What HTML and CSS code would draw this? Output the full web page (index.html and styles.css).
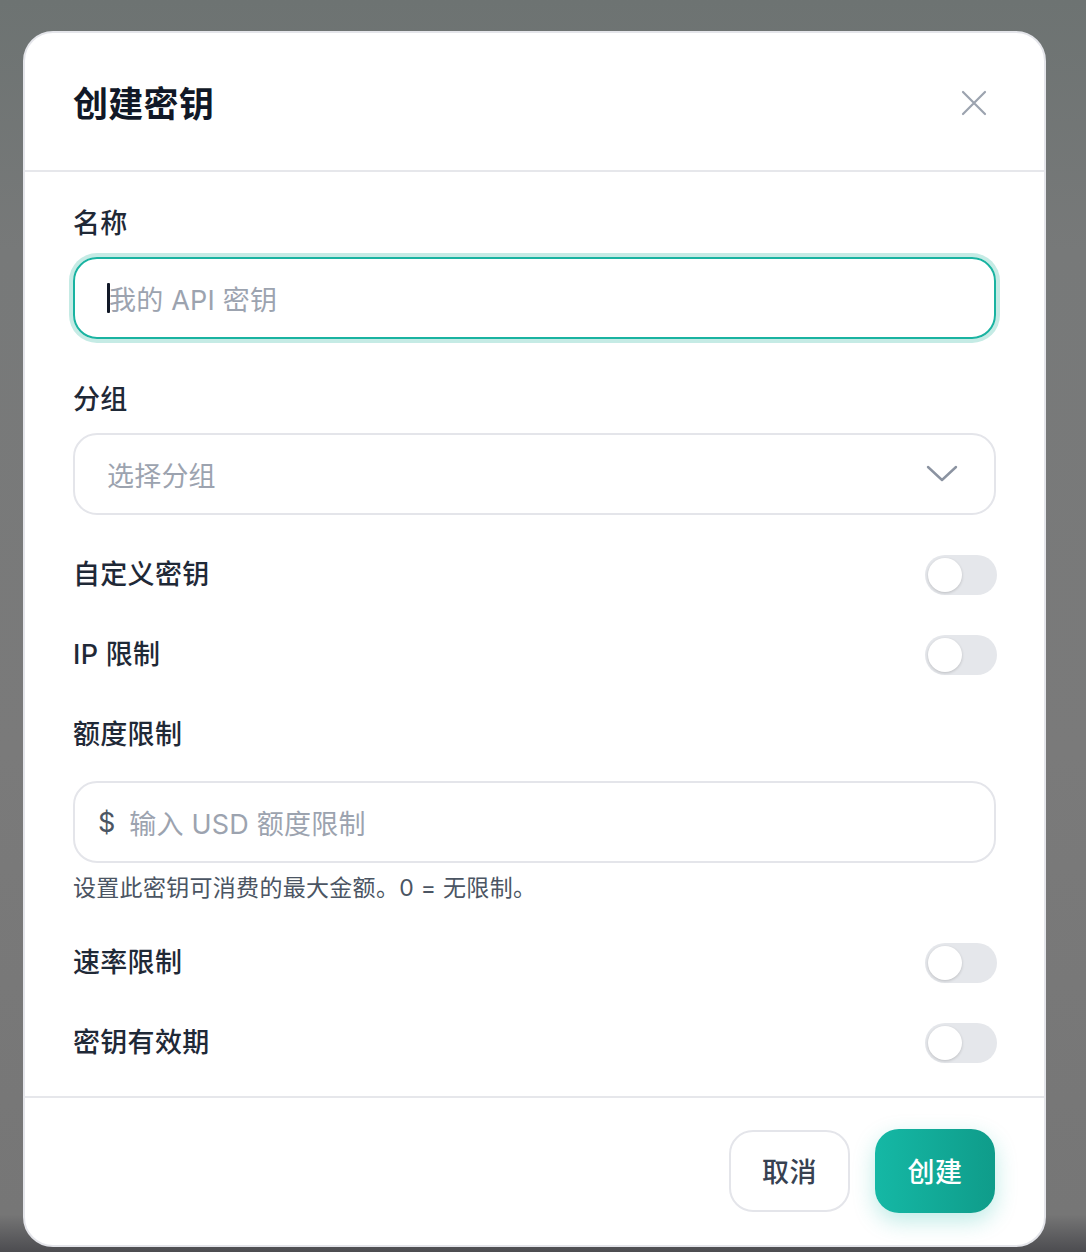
FILE: index.html
```html
<!DOCTYPE html>
<html lang="zh-CN">
<head>
<meta charset="utf-8">
<title>创建密钥</title>
<link rel="stylesheet" href="styles.css">
</head>
<body>
<div class="overlay">
  <div class="modal">
    <div class="modal-header">
      <h2 class="modal-title">创建密钥</h2>
      <button class="close-btn" aria-label="关闭">
        <svg width="28" height="28" viewBox="0 0 28 28" fill="none" stroke="#9ca3af" stroke-width="2.2" stroke-linecap="round"><path d="M3 3L25 25M25 3L3 25"/></svg>
      </button>
    </div>
    <div class="modal-body">
      <div class="field">
        <div class="label">名称</div>
        <div class="input input-focus"><span class="caret"></span><span class="ph">我的 API 密钥</span></div>
      </div>
      <div class="field field-group">
        <div class="label">分组</div>
        <div class="input select"><span class="ph">选择分组</span>
          <svg class="chev" width="32" height="18" viewBox="0 0 32 18" fill="none" stroke="#8b93a1" stroke-width="2.4" stroke-linecap="round" stroke-linejoin="round"><path d="M2 2L16 15L30 2"/></svg>
        </div>
      </div>
      <div class="toggle-row"><span class="label">自定义密钥</span><span class="toggle"><span class="knob"></span></span></div>
      <div class="toggle-row"><span class="label">IP 限制</span><span class="toggle"><span class="knob"></span></span></div>
      <div class="field">
        <div class="label label-tall">额度限制</div>
        <div class="input input-quota"><span class="dollar">$</span><span class="ph">输入 USD 额度限制</span></div>
        <div class="help">设置此密钥可消费的最大金额。0 = 无限制。</div>
      </div>
      <div class="toggle-row"><span class="label">速率限制</span><span class="toggle"><span class="knob"></span></span></div>
      <div class="toggle-row"><span class="label">密钥有效期</span><span class="toggle"><span class="knob"></span></span></div>
    </div>
    <div class="modal-footer">
      <button class="btn btn-cancel">取消</button>
      <button class="btn btn-primary">创建</button>
    </div>
  </div>
</div>
</body>
</html>
```
FILE: styles.css
```css
html, body {
  margin: 0;
  padding: 0;
}
body {
  width: 1086px;
  height: 1252px;
  overflow: hidden;
  font-family: Inter, "Noto Sans CJK SC", sans-serif;
  background: linear-gradient(180deg, #6d7372 0%, #777979 20%, #7a7a7a 60%, #767676 97%, #4c4c50 100%);
}
.overlay {
  padding: 31px 0 0 23px;
}
.modal {
  width: 1019px;
  height: 1212px;
  background: #fff;
  border: 2px solid #e4e5ea;
  border-radius: 30px;
  display: flex;
  flex-direction: column;
  box-sizing: content-box;
}
.modal-header {
  height: 137px;
  display: flex;
  align-items: center;
  justify-content: space-between;
  padding: 0 56px 0 48px;
  border-bottom: 2px solid #e6e7eb;
}
.modal-title {
  margin: 0;
  font-size: 35px;
  font-weight: 700;
  color: #111827;
  letter-spacing: 0.3px;
}
.close-btn {
  background: none;
  border: 0;
  padding: 0;
  width: 28px;
  height: 28px;
  display: flex;
  margin-top: 2px;
}
.modal-body {
  padding: 34px 48px 33px 48px;
  display: flex;
  flex-direction: column;
  gap: 40px;
  border-bottom: 2px solid #e6e7eb;
}
.field {
  display: flex;
  flex-direction: column;
}
.field-group {
  margin-top: 3px;
}
.label {
  font-size: 27px;
  line-height: 36px;
  font-weight: 500;
  color: #1f2937;
  letter-spacing: 0.3px;
}
.field > .label {
  margin-bottom: 15px;
}
.field > .label-tall {
  line-height: 40px;
  margin-bottom: 26px;
}
.input {
  height: 82px;
  box-sizing: border-box;
  border: 2px solid #e4e5ea;
  border-radius: 24px;
  display: flex;
  align-items: center;
  padding: 0 32px;
  font-size: 27px;
  color: #9ca3af;
}
.input-focus {
  border-color: #19b3a1;
  box-shadow: 0 0 0 4px #c5ebe5;
}
.caret {
  width: 3px;
  height: 30px;
  background: #111827;
  border-radius: 1px;
  margin-right: -1px;
}
.ph {
  color: #9ca3af;
  letter-spacing: 0.2px;
}
.select {
  justify-content: space-between;
  padding-right: 36px;
}
.chev {
  display: block;
}
.input-quota {
  padding-left: 23px;
}
.dollar {
  color: #4b5563;
  font-size: 27px;
  margin-right: 14px;
}
.help {
  margin-top: 10px;
  font-size: 23px;
  line-height: 30px;
  color: #4b5563;
  letter-spacing: 0.3px;
}
.toggle-row {
  height: 40px;
  display: flex;
  align-items: center;
  justify-content: space-between;
}
.toggle {
  width: 72px;
  height: 40px;
  border-radius: 20px;
  background: #e5e7eb;
  display: flex;
  align-items: center;
  padding: 0 3px;
  box-sizing: border-box;
  margin-right: -1px;
}
.knob {
  width: 34px;
  height: 34px;
  border-radius: 50%;
  background: #fff;
  box-shadow: 0 1px 3px rgba(0, 0, 0, 0.18);
}
.modal-footer {
  flex: 1;
  display: flex;
  justify-content: flex-end;
  align-items: center;
  gap: 25px;
  padding: 0 49px 2px 48px;
}
.btn {
  height: 82px;
  border-radius: 24px;
  font-family: Inter, "Noto Sans CJK SC", sans-serif;
  font-size: 27px;
  font-weight: 500;
  letter-spacing: 0.5px;
  box-sizing: border-box;
}
.btn-cancel {
  width: 121px;
  background: #fff;
  border: 2px solid #e4e5ea;
  color: #374151;
}
.btn-primary {
  width: 120px;
  height: 84px;
  border: 0;
  color: #fff;
  background: linear-gradient(90deg, #15b8a5 0%, #0f9c8a 100%);
  box-shadow: 0 8px 22px rgba(20, 184, 166, 0.28);
}
```
